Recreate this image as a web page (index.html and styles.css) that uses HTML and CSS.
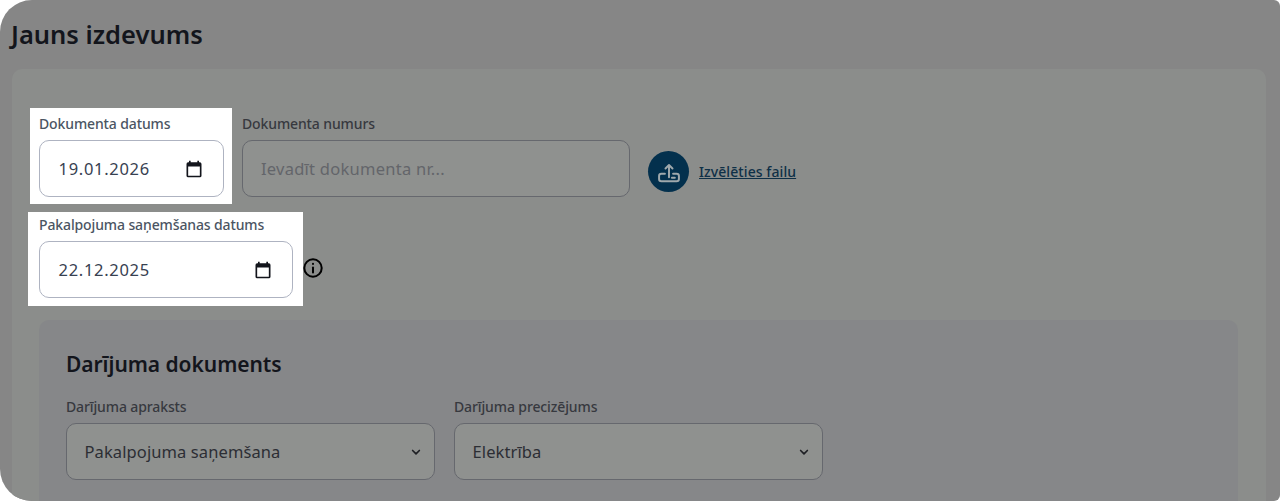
FILE: index.html
```html
<!DOCTYPE html>
<html lang="lv">
<head>
<meta charset="utf-8">
<title>Jauns izdevums</title>
<link rel="stylesheet" href="styles.css">
</head>
<body>
<main class="page">
  <h1 class="title">Jauns izdevums</h1>
  <section class="panel">
    <div class="row row-top">
      <div class="field spot spot-a">
        <div class="label">Dokumenta datums</div>
        <div class="input date"><span>19.01.2026</span>
          <svg class="cal" viewBox="0 0 24 24"><path d="M19 4h-1V2h-2v2H8V2H6v2H5a2 2 0 0 0-2 2v14a2 2 0 0 0 2 2h14a2 2 0 0 0 2-2V6a2 2 0 0 0-2-2zm0 16H5V9h14v11z"/></svg>
        </div>
      </div>
      <div class="field plain">
        <div class="label dim">Dokumenta numurs</div>
        <div class="input dark wide"><span class="ph">Ievadīt dokumenta nr...</span></div>
      </div>
      <div class="upload">
        <span class="circle">
          <svg viewBox="0 0 24 24" fill="none" stroke="#9fa8ac" stroke-width="1.700" stroke-linecap="round" stroke-linejoin="round"><path d="M12 16.500V6M9 9l3-3 3 3"/><path d="M8.500 13.500H5.500a2 2 0 0 0-2 2v2.500a2 2 0 0 0 2 2h13a2 2 0 0 0 2-2v-2.500a2 2 0 0 0-2-2h-3"/><path d="M14.500 17h2.500"/></svg>
        </span>
        <a class="link">Izvēlēties failu</a>
      </div>
    </div>
    <div class="row row-second">
      <div class="field spot spot-b">
        <div class="label">Pakalpojuma saņemšanas datums</div>
        <div class="input date second"><span>22.12.2025</span>
          <svg class="cal" viewBox="0 0 24 24"><path d="M19 4h-1V2h-2v2H8V2H6v2H5a2 2 0 0 0-2 2v14a2 2 0 0 0 2 2h14a2 2 0 0 0 2-2V6a2 2 0 0 0-2-2zm0 16H5V9h14v11z"/></svg>
        </div>
      </div>
      <svg class="info" viewBox="0 0 24 24" fill="none" stroke="#000" stroke-width="2.200" stroke-linecap="round"><circle cx="12" cy="12" r="9.500"/><path d="M12 11.500v5.500"/><path d="M12 7.400v.2"/></svg>
    </div>
    <section class="inner">
      <h2 class="subtitle">Darījuma dokuments</h2>
      <div class="selects">
        <div class="field plain">
          <div class="label dim">Darījuma apraksts</div>
          <div class="input dark select sel-a"><span>Pakalpojuma saņemšana</span>
            <svg class="chev" viewBox="0 0 16 16" fill="none" stroke="#1e1f24" stroke-width="2.200" stroke-linecap="round" stroke-linejoin="round"><path d="M3.500 6 8 10.500 12.500 6"/></svg>
          </div>
        </div>
        <div class="field plain">
          <div class="label dim">Darījuma precizējums</div>
          <div class="input dark select sel-b"><span>Elektrība</span>
            <svg class="chev" viewBox="0 0 16 16" fill="none" stroke="#1e1f24" stroke-width="2.200" stroke-linecap="round" stroke-linejoin="round"><path d="M3.500 6 8 10.500 12.500 6"/></svg>
          </div>
        </div>
      </div>
    </section>
  </section>
</main>
</body>
</html>
```
FILE: styles.css
```css
* { box-sizing: border-box; }
html, body { margin: 0; height: 100%; background: #fff; }
body { overflow: hidden; font-family: "Noto Sans", sans-serif; }

.page {
  height: 501px;
  background: #868686;
  border-radius: 32px 6px 6px 32px;
  overflow: hidden;
  padding: 17px 14px 0 12px;
}
.title {
  margin: 0 0 18px -1px;
  font-size: 25.500px;
  line-height: 34px;
  font-weight: 600;
  color: #13151c;
}
.panel {
  height: 500px;
  background: #8b8d8b;
  border-radius: 10px;
  padding: 39px 28px 0 18px;
}
.row { display: flex; align-items: flex-start; }
.field { display: flex; flex-direction: column; }
.spot { background: #fff; }
.spot-a { width: 202px; height: 96px; padding: 6px 8px 0 9px; }
.spot-b { width: 275px; height: 94px; margin-left: -2px; padding: 3px 10px 0 11px; }
.plain { padding-top: 6px; }
.row-top { gap: 10px; }
.row-second { margin-top: 8px; align-items: flex-start; }
.label {
  font-size: 14px;
  line-height: 20px;
  font-weight: 500;
  letter-spacing: -0.12px;
  color: #4b5563;
  margin-bottom: 6px;
}
.label.dim { color: #37393f; }
.input {
  height: 57px;
  border-radius: 10px;
  border: 1.750px solid #aeb3c1;
  background: #fff;
  display: flex;
  align-items: center;
  justify-content: space-between;
  padding: 0 20px 0 18px;
  font-size: 16.500px;
  color: #374151;
}
.date { letter-spacing: 0.7px; padding-left: 18.500px; }
.cal { width: 20px; height: 20px; fill: #13151c; flex: none; margin-right: -1px; }
.dark { background: #8f918f; border-color: #66686e; color: #2c2e34; }
.wide { width: 388px; }
.ph { color: #63656a; letter-spacing: 0.25px; }
.upload { display: flex; align-items: center; gap: 10px; margin: 43px 0 0 8px; }
.circle {
  width: 41px; height: 41px; border-radius: 50%;
  background: #03304d;
  display: flex; align-items: center; justify-content: center;
}
.circle svg { width: 28px; height: 28px; }
.link { font-size: 14px; font-weight: 500; letter-spacing: 0.08px; color: #0f3047; text-decoration: underline; }
.info { width: 22px; height: 22px; margin: 45px 0 0 -1px; }
.inner {
  margin: 14px 0 0 9px;
  height: 300px;
  background: #868789;
  border-radius: 10px;
  padding: 28px 27px 0 27px;
}
.subtitle {
  margin: 0 0 17px;
  font-size: 21px;
  line-height: 32px;
  font-weight: 600;
  letter-spacing: -0.05px;
  color: #13151c;
}
.selects { display: flex; gap: 19px; }
.selects .plain { padding-top: 0; }
.select { padding: 0 12px 0 17.500px; }
.select span { letter-spacing: 0.1px; }
.chev { width: 12px; height: 12px; flex: none; }
.sel-a { width: 369px; }
.sel-b { width: 369px; }
```
